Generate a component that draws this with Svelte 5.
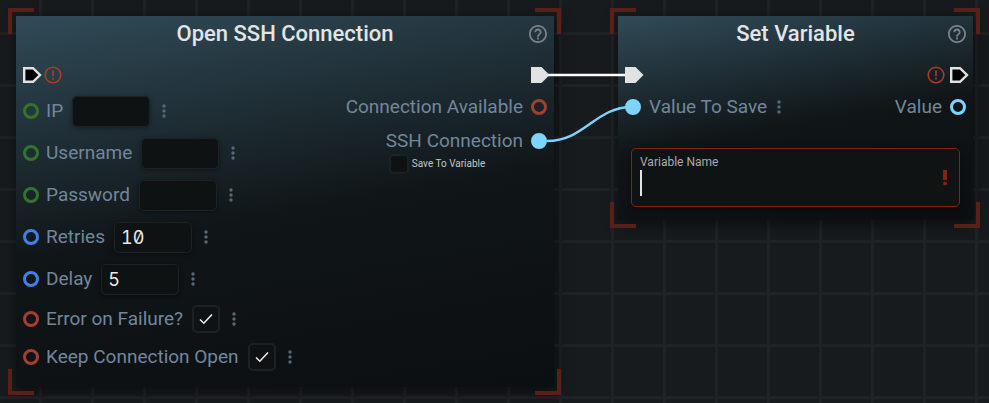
<script>
  const fields = [
    { id: 'ip', label: 'IP', value: '', tone: 'green' },
    { id: 'username', label: 'Username', value: '', tone: 'green' },
    { id: 'password', label: 'Password', value: '', tone: 'green' },
    { id: 'retries', label: 'Retries', value: '10', tone: 'blue' },
    { id: 'delay', label: 'Delay', value: '5', tone: 'blue' }
  ];
  const flags = [
    { id: 'error-on-failure', label: 'Error on Failure?' },
    { id: 'keep-open', label: 'Keep Connection Open' }
  ];
</script>

{#snippet port(tone, filled = false)}
  <span class="port {tone}" class:filled></span>
{/snippet}

{#snippet exec(filled)}
  <svg class="exec" width="16" height="16" viewBox="0 0 16 16" aria-hidden="true">
    {#if filled}
      <path d="M0 0H10.5L18.5 8L10.5 16H0Z" fill="#e2e2e2" />
    {:else}
      <path d="M1.2 1.2H10L17 8L10 14.8H1.2Z" fill="#000" stroke="#e2e2e2" stroke-width="2.4" />
    {/if}
  </svg>
{/snippet}

{#snippet alert()}
  <svg class="alert" width="18" height="18" viewBox="0 0 18 18" aria-hidden="true">
    <circle cx="9" cy="9" r="7.8" fill="none" stroke="#b03b20" stroke-width="1.6" />
    <path d="M9 4.6V10.2M9 11.8V13.4" stroke="#b03b20" stroke-width="1.7" />
  </svg>
{/snippet}

{#snippet help()}
  <button class="icon help" aria-label="Help">
    <svg width="18" height="18" viewBox="2 2 20 20" fill="currentColor" aria-hidden="true">
      <path d="M11 18h2v-2h-2v2zm1-16C6.48 2 2 6.48 2 12s4.48 10 10 10 10-4.48 10-10S17.52 2 12 2zm0 18c-4.41 0-8-3.59-8-8s3.59-8 8-8 8 3.59 8 8-3.59 8-8 8zm0-14c-2.21 0-4 1.79-4 4h2c0-1.1.9-2 2-2s2 .9 2 2c0 2-3 1.75-3 5h2c0-2.25 3-2.5 3-5 0-2.21-1.79-4-4-4z" />
    </svg>
  </button>
{/snippet}

{#snippet more()}
  <button class="icon more" aria-label="More options">
    <svg width="4" height="14" viewBox="0 0 4 14" fill="currentColor" aria-hidden="true">
      <circle cx="2" cy="2" r="1.7" /><circle cx="2" cy="7" r="1.7" /><circle cx="2" cy="12" r="1.7" />
    </svg>
  </button>
{/snippet}

{#snippet corners()}
  <span class="corner tl"></span><span class="corner tr"></span>
  <span class="corner bl"></span><span class="corner br"></span>
{/snippet}

<main class="canvas">
  <section class="node ssh">
    {@render corners()}
    <header><h2>Open SSH Connection</h2>{@render help()}</header>
    <div class="columns">
      <div class="inputs">
        <div class="row exec-row">{@render exec(false)}{@render alert()}</div>
        {#each fields as f}
          <div class="row field">
            {@render port(f.tone)}
            <label for={f.id}>{f.label}</label>
            <input class="text" id={f.id} type="text" value={f.value} />
            {@render more()}
          </div>
        {/each}
        {#each flags as f}
          <div class="row flag">
            {@render port('red')}
            <label for={f.id}>{f.label}</label>
            <span class="tick">
              <input id={f.id} type="checkbox" checked />
              <svg width="14" height="12" viewBox="0 0 14 12" aria-hidden="true">
                <path d="M1 6.5L4.8 10.2L13 1.5" fill="none" stroke="#ececec" stroke-width="1.6" />
              </svg>
            </span>
            {@render more()}
          </div>
        {/each}
      </div>
      <div class="outputs">
        <div class="row exec-row">{@render exec(true)}</div>
        <div class="row out"><span>Connection Available</span>{@render port('red')}</div>
        <div class="result">
          <div class="row out"><span>SSH Connection</span>{@render port('cyan', true)}</div>
          <label class="save"><input type="checkbox" />Save To Variable</label>
        </div>
      </div>
    </div>
  </section>

  <section class="node variable">
    {@render corners()}
    <header><h2>Set Variable</h2>{@render help()}</header>
    <div class="columns">
      <div class="inputs">
        <div class="row exec-row">{@render exec(true)}</div>
        <div class="row out">{@render port('cyan', true)}<span>Value To Save</span>{@render more()}</div>
      </div>
      <div class="outputs">
        <div class="row exec-row">{@render alert()}{@render exec(false)}</div>
        <div class="row out"><span>Value</span>{@render port('cyan')}</div>
      </div>
    </div>
    <div class="name">
      <label for="variable-name">Variable Name</label>
      <input id="variable-name" type="text" />
      <span class="caret"></span>
      <svg class="bang" width="4" height="16" viewBox="0 0 4 16" aria-hidden="true">
        <path d="M0 0H4V10H0Z" fill="#84240f" /><circle cx="2" cy="13.5" r="1.9" fill="#84240f" />
      </svg>
    </div>
  </section>

  <svg class="wires" width="100" height="80" viewBox="0 0 100 80" fill="none" aria-hidden="true">
    <path d="M8 15H85" stroke="#fff" stroke-width="2.4" />
    <path d="M7 81C45 81 55 47 92 47" stroke="#7fd3ff" stroke-width="2.4" />
  </svg>
</main>

<style>
  :global(body) {
    background: #171b1e;
  }
  .canvas {
    position: relative;
    min-height: 100vh;
    overflow: hidden;
    font-family: Roboto, 'Liberation Sans', sans-serif;
    font-size: 19px;
    line-height: 24px;
    color: #71879c;
    background-color: #171b1e;
    background-image:
      linear-gradient(90deg, #1f2326 3px, transparent 3px),
      linear-gradient(#1f2326 3px, transparent 3px);
    background-size: 52px 52px;
    background-position: 39px 32px;
  }
  .node {
    position: absolute;
    top: 16px;
    box-sizing: border-box;
    background: linear-gradient(170deg, #304b58 0%, #101517 53%, #0b0f11 100%);
    box-shadow: 2px 4px 14px rgba(0, 0, 0, 0.55);
  }
  .ssh {
    left: 16px;
    width: 538px;
    padding-bottom: 11px;
  }
  .variable {
    left: 618px;
    width: 355px;
    padding-bottom: 13px;
  }
  .corner {
    position: absolute;
    width: 22px;
    height: 22px;
    border: 0 solid #5c1f17;
  }
  .tl { top: -8px; left: -8px; border-width: 4px 0 0 4px; }
  .tr { top: -8px; right: -7px; border-width: 4px 4px 0 0; }
  .bl { bottom: -8px; left: -8px; border-width: 0 0 4px 4px; }
  .br { bottom: -8px; right: -7px; border-width: 0 4px 4px 0; }
  header {
    display: flex;
    align-items: center;
    height: 36px;
    padding: 0 7px 8px 25px;
  }
  h2 {
    flex: 1;
    margin: 0;
    text-align: center;
    font-size: 22px;
    font-weight: 500;
    color: #e4e4e4;
  }
  .icon {
    display: flex;
    padding: 0;
    border: 0;
    background: none;
    color: #56697a;
  }
  .help {
    color: #78848a;
  }
  .more {
    margin-left: 12px;
  }
  .columns {
    display: flex;
    justify-content: space-between;
    padding: 0 7px;
  }
  .row {
    display: flex;
    align-items: center;
  }
  .outputs {
    display: flex;
    flex-direction: column;
    align-items: flex-end;
  }
  .exec-row {
    height: 30px;
    gap: 5px;
  }
  .exec {
    overflow: visible;
  }
  .field {
    height: 42px;
  }
  .flag {
    height: 38px;
  }
  .out {
    height: 34px;
    gap: 8px;
  }
  .out .more {
    margin-left: 2px;
  }
  .port {
    box-sizing: border-box;
    width: 16px;
    height: 16px;
    border: 3px solid;
    border-radius: 50%;
  }
  .green { color: #32752a; }
  .blue { color: #3f80ea; }
  .red { color: #a63d31; }
  .cyan { color: #7fd3ff; }
  .filled { background: currentColor; }
  .field label,
  .flag label {
    margin: 0 9px 0 7px;
  }
  .text {
    box-sizing: border-box;
    width: 78px;
    height: 31px;
    padding: 0 6px;
    border: 1px solid #1d2224;
    border-radius: 5px;
    background: #0e1213;
    color: #e8e8e8;
    font-family: Inter, 'DejaVu Sans Mono', monospace;
    font-size: 18px;
    font-feature-settings: 'zero', 'tnum';
    box-shadow: 0 1px 5px rgba(0, 0, 0, 0.4);
  }
  input[type='checkbox'] {
    appearance: none;
    box-sizing: border-box;
    margin: 0;
    background: #0e1213;
    border: 2px solid #1d2123;
    border-radius: 5px;
  }
  .tick {
    display: grid;
    place-items: center;
  }
  .tick > * {
    grid-area: 1 / 1;
  }
  .tick input {
    width: 28px;
    height: 28px;
  }
  .tick svg {
    position: relative;
    pointer-events: none;
  }
  .save {
    display: flex;
    align-items: center;
    gap: 3px;
    margin-top: -4px;
    padding-left: 3px;
    font-size: 10px;
    line-height: 20px;
    color: #c4c6c7;
  }
  .save input {
    width: 20px;
    height: 20px;
  }
  .name {
    position: relative;
    margin: 24px 13px 0;
    padding: 5px 8px 8px;
    border: 1px solid #84240f;
    border-radius: 5px;
    background: #0f1314;
    box-shadow: 0 2px 10px rgba(0, 0, 0, 0.4);
  }
  .name label {
    display: block;
    font-size: 12px;
    line-height: 16px;
    color: #a9abac;
  }
  .name input {
    display: block;
    box-sizing: border-box;
    width: 100%;
    height: 28px;
    padding: 0 24px 0 0;
    border: 0;
    outline: 0;
    background: none;
    color: #e8e8e8;
    font: inherit;
  }
  .caret {
    position: absolute;
    left: 8px;
    bottom: 10px;
    width: 2px;
    height: 26px;
    background: #e4e4e4;
  }
  .bang {
    position: absolute;
    top: 21px;
    right: 12px;
  }
  .wires {
    position: absolute;
    left: 540px;
    top: 60px;
    overflow: visible;
    pointer-events: none;
  }
</style>
